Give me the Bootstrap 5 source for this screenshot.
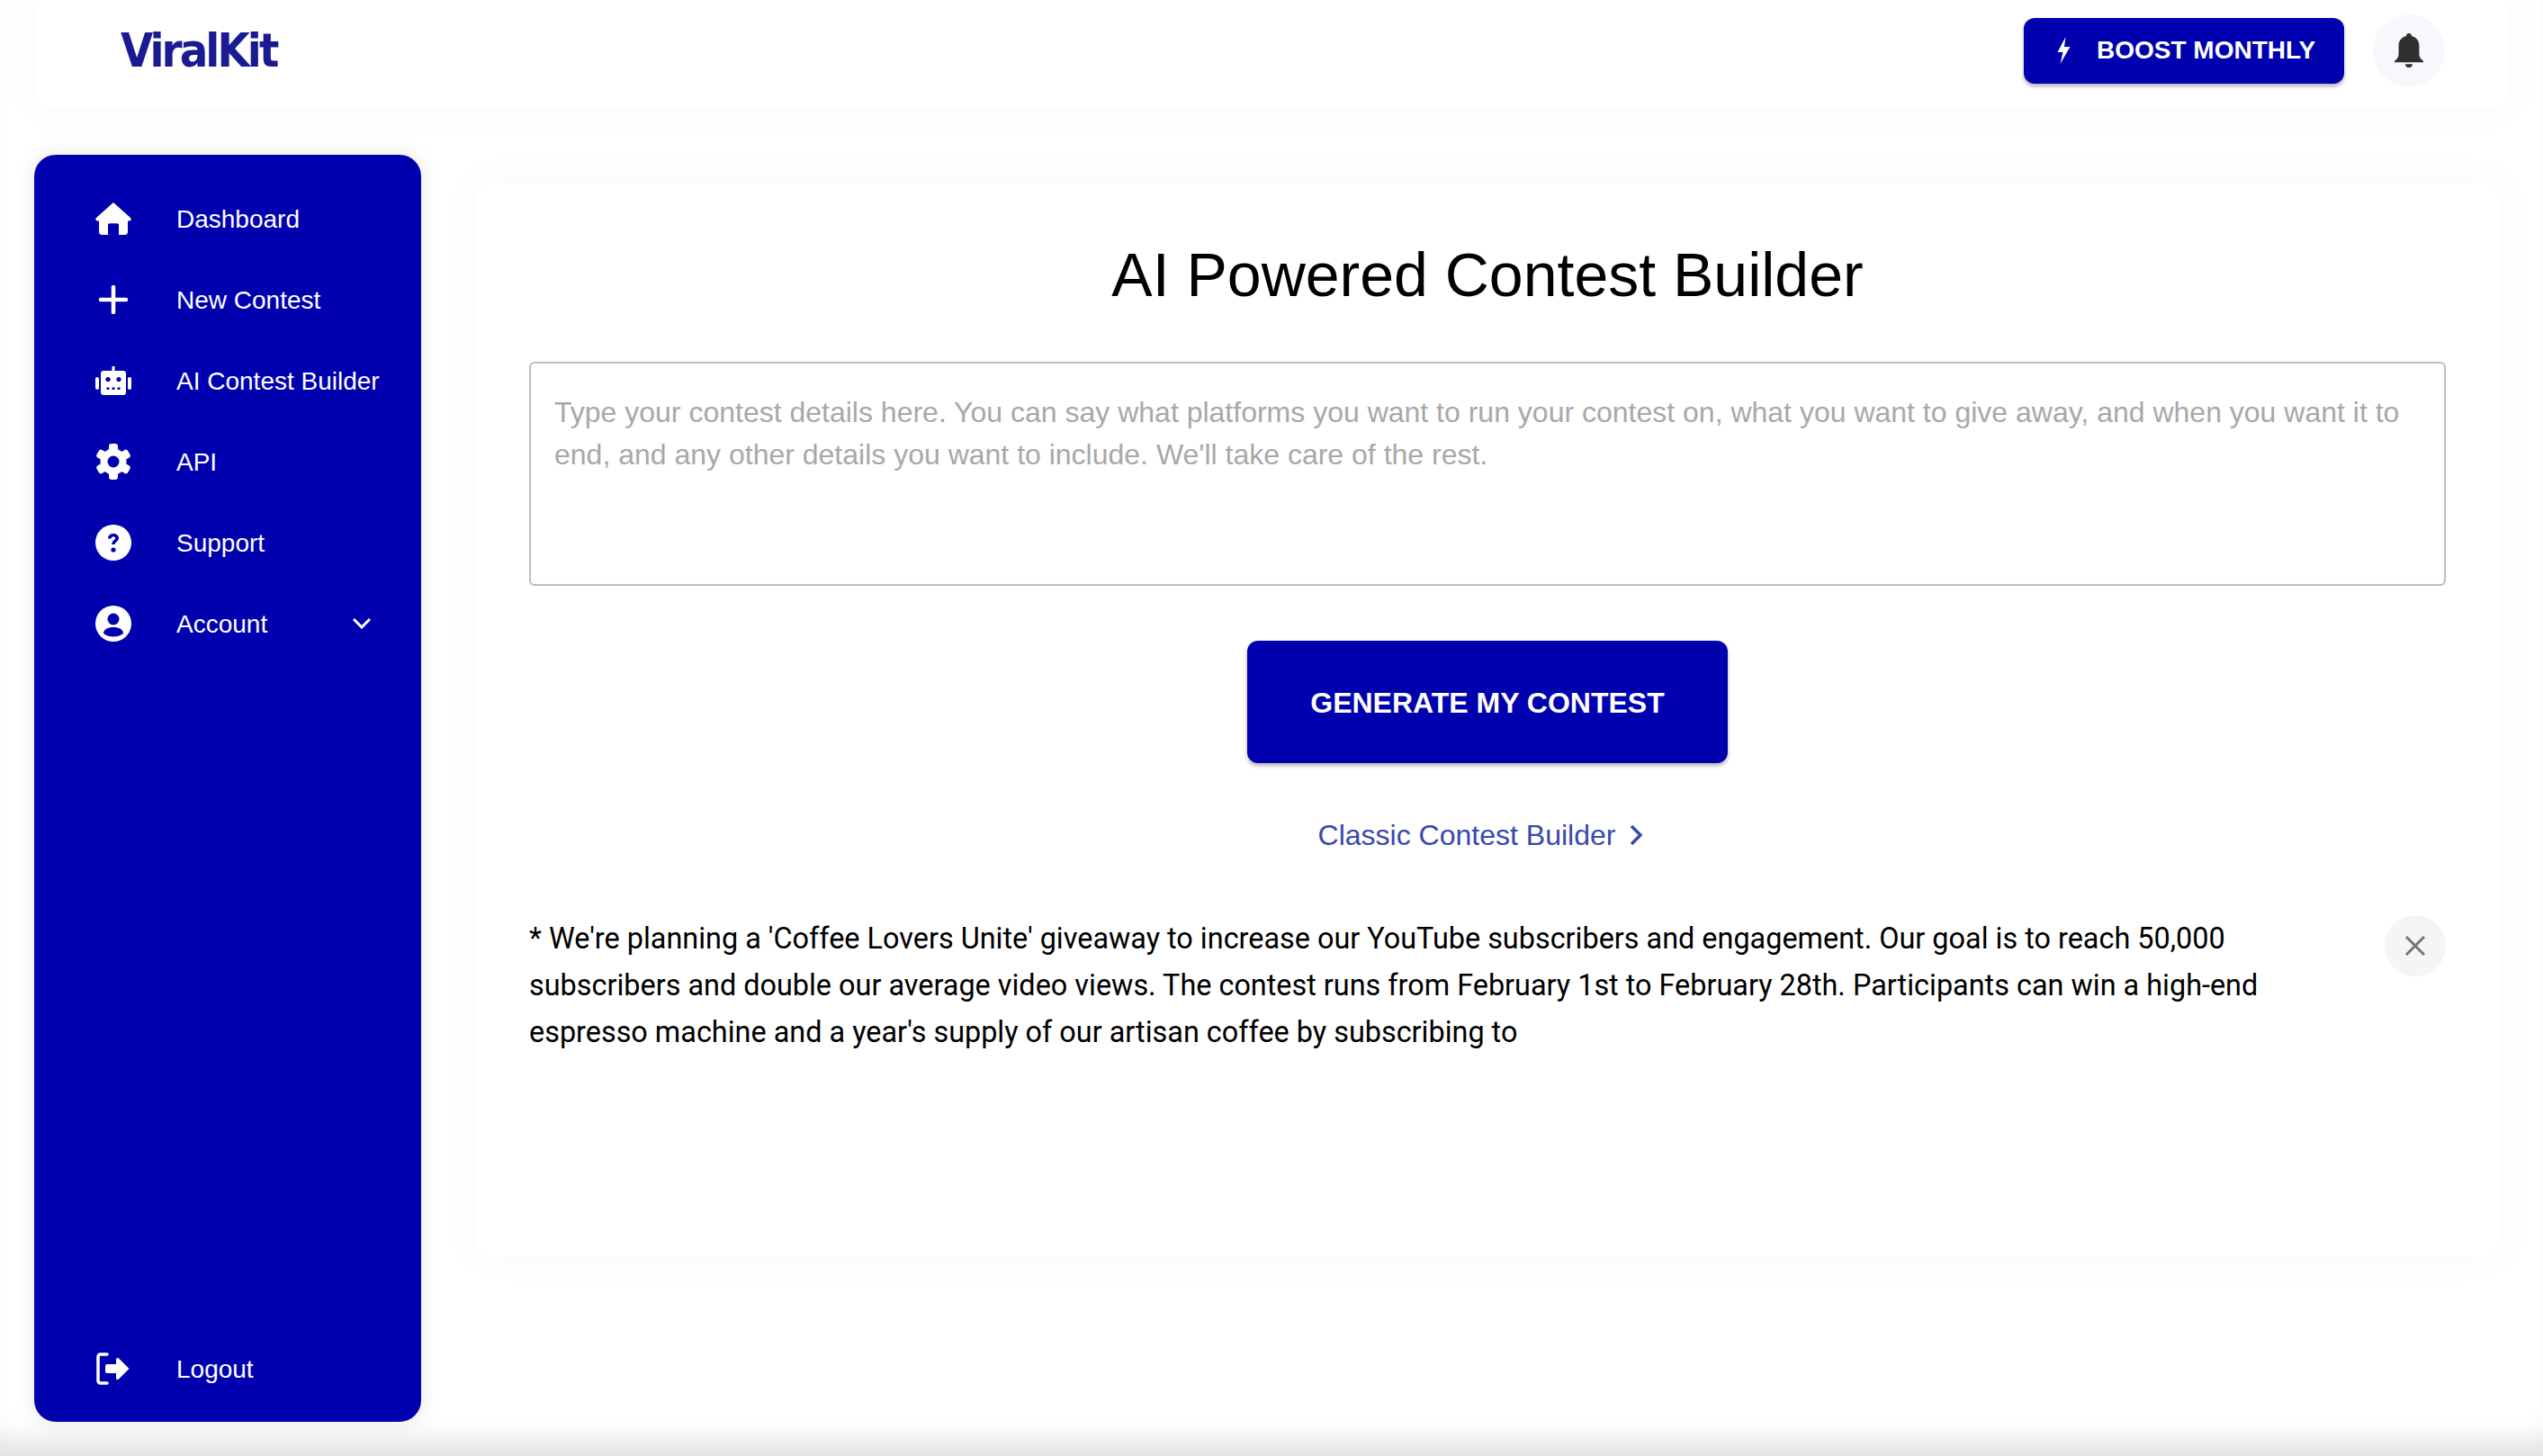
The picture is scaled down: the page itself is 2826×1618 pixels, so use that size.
<!DOCTYPE html>
<html lang="en">
<head>
  <meta charset="UTF-8">
  <title>AI Powered Contest Builder</title>
  <meta name="viewport" content="width=device-width, initial-scale=1">
  <link href="https://cdn.jsdelivr.net/npm/bootstrap@5.3.3/dist/css/bootstrap.min.css" rel="stylesheet">
  <style>
    html, body {
      height: 100%;
    }

    body {
      background-color: #fff;
      font-family: "Liberation Sans", Arial, sans-serif;
      overflow: hidden;
    }

    .page-wrap {
      height: 1618px;
      padding: 0 37px 38px 38px;
      box-shadow: inset 0 -34px 30px -18px rgba(0, 0, 0, 0.13);
    }

    .top-bar {
      height: 120px;
      padding: 0 72px 8px 96px;
      background-color: #fff;
      border-radius: 0 0 20px 20px;
      box-shadow: 0 0 40px 12px rgba(0, 0, 0, 0.02);
    }

    .brand-text {
      color: #1a1a92;
      font-family: "DejaVu Sans Condensed", "DejaVu Sans", sans-serif;
      font-size: 52px;
      font-weight: 700;
      letter-spacing: -2.9px;
      line-height: 1;
      text-decoration: none;
    }

    .boost-btn {
      width: 356px;
      height: 73px;
      padding: 0 0 0 36px;
      font-size: 28px;
      gap: 28px;
      white-space: nowrap;
      flex-shrink: 0;
    }

    .boost-btn svg {
      flex-shrink: 0;
    }

    .brand-btn {
      background-color: #0000af;
      border: 0;
      border-radius: 12px;
      color: #fff;
      font-weight: 700;
      box-shadow: 0 3px 4px rgba(0, 0, 0, 0.3);
    }

    .brand-btn:hover {
      background-color: #0000af;
      color: #fff;
    }

    .bell-btn {
      width: 80px;
      height: 80px;
      margin-left: 32px;
      background-color: #f7f8fc;
      border-radius: 50%;
      flex-shrink: 0;
    }

    .body-row {
      margin-top: 52px;
      height: 1408px;
    }

    .side-bar {
      width: 430px;
      flex-shrink: 0;
      padding: 26px 0 14px 0;
      background-color: #0000af;
      border-radius: 24px;
      box-shadow: 0 0 24px rgba(0, 0, 0, 0.1);
    }

    .side-link {
      height: 90px;
      padding: 0 56px 0 68px;
      color: #fff;
      font-size: 28px;
      white-space: nowrap;
      text-decoration: none;
    }

    .side-link:hover {
      color: #fff;
    }

    .side-link span {
      padding-top: 2px;
    }

    .side-icon {
      width: 40px;
      margin-right: 50px;
      flex-shrink: 0;
    }

    .main-card {
      width: 2250px;
      height: 1192px;
      margin: 32px 0 0 60px;
      padding: 0 60px;
      background-color: #fff;
      border-radius: 20px;
      box-shadow: 0 0 40px 12px rgba(0, 0, 0, 0.02);
    }

    .page-title {
      margin: 0;
      padding-top: 62px;
      color: #000;
      font-size: 68px;
      font-weight: 400;
      line-height: 78px;
    }

    .prompt-box {
      height: 249px;
      margin-top: 58px;
      padding: 31px 26px 26px;
      border: 2px solid #bdbdbd;
      border-radius: 6px;
      font-size: 32px;
      line-height: 47px;
      resize: none;
    }

    .prompt-box::placeholder {
      color: #a8a8a8;
    }

    .generate-btn {
      width: 534px;
      height: 136px;
      margin-top: 61px;
      padding-top: 8px;
      font-size: 32px;
    }

    .classic-link {
      margin-top: 60px;
      padding-right: 16px;
      color: #3949ab;
      font-size: 32px;
      line-height: 40px;
      text-decoration: none;
    }

    .suggest-row {
      margin-top: 69px;
    }

    .suggest-text {
      width: 1960px;
      margin: 0;
      color: #000;
      font-family: Roboto, "Liberation Sans", sans-serif;
      font-size: 32.4px;
      line-height: 52px;
    }

    .close-btn {
      width: 68px;
      height: 68px;
      background-color: #f5f5f5;
      border-radius: 50%;
    }
  </style>
</head>
<body>

<div class="page-wrap">
  <header class="top-bar d-flex align-items-center justify-content-between">
    <a class="brand-text" href="#">ViralKit</a>
    <div class="d-flex align-items-center">
      <button class="btn brand-btn boost-btn d-flex align-items-center" type="button">
        <svg width="17" height="30" viewBox="0 0 16 30" fill="#fff"><path d="M10 0 1 17h6L4 30 15 11H8.500L10 0Z"/></svg>
        <span>BOOST MONTHLY</span>
      </button>
      <div class="bell-btn d-flex align-items-center justify-content-center">
        <svg width="32" height="39" viewBox="0 0 28 40" preserveAspectRatio="none" fill="#303030"><path d="M14 0c1.700 0 2.600 1.200 2.600 3.200C21.500 4.700 24 9 24 14v10c0 3 1.600 5.500 4 7.500V33H0v-1.500C2.400 29.500 4 27 4 24V14c0-5 2.500-9.300 7.400-10.800C11.400 1.200 12.300 0 14 0Z"/><path d="M10.500 35h7c0 2.500-1.500 4-3.500 4s-3.500-1.500-3.500-4Z"/></svg>
      </div>
    </div>
  </header>

  <div class="body-row d-flex align-items-start">
    <nav class="side-bar d-flex flex-column h-100">
      <a class="side-link d-flex align-items-center" href="#">
        <svg class="side-icon" height="36" viewBox="0 0 40 36" fill="#fff"><path d="M20 0 39 17c1.500 1.500.5 3.500-1.200 3.500H36v12c0 2-1.200 3.500-3.200 3.500H26V25c0-1-.8-1.800-1.800-1.800h-8.400c-1 0-1.800.8-1.800 1.800v11H7.200C5.200 36 4 34.500 4 32.500v-12H2.200C.5 20.500-.5 18.500 1 17L20 0Z"/></svg>
        <span>Dashboard</span>
      </a>
      <a class="side-link d-flex align-items-center" href="#">
        <svg class="side-icon" height="32" viewBox="0 0 40 32" fill="none" stroke="#fff" stroke-width="4.500" stroke-linecap="round"><path d="M20 2v28M6 16h28"/></svg>
        <span>New Contest</span>
      </a>
      <a class="side-link d-flex align-items-center" href="#">
        <svg class="side-icon" height="32" viewBox="0 0 40 32" fill="#fff"><path fill-rule="evenodd" d="M18.500 0h3v5H31c1.800 0 3 1.200 3 3v21c0 1.800-1.200 3-3 3H9c-1.800 0-3-1.200-3-3V8c0-1.800 1.200-3 3-3h9.500V0ZM14 12a2.600 2.600 0 1 0 0 5.200 2.600 2.600 0 0 0 0-5.200Zm12 0a2.600 2.600 0 1 0 0 5.200 2.600 2.600 0 0 0 0-5.200ZM12.500 23.500v2.500h3v-2.500h-3Zm6 0v2.500h3v-2.500h-3Zm6 0v2.500h3v-2.500h-3Z"/><rect x="0" y="12" width="4" height="14" rx="2"/><rect x="36" y="12" width="4" height="14" rx="2"/></svg>
        <span>AI Contest Builder</span>
      </a>
      <a class="side-link d-flex align-items-center" href="#">
        <svg class="side-icon" height="40" viewBox="0 0 40 40"><circle cx="20" cy="20" r="14.500" fill="#fff"/><rect x="15" y="0" width="10" height="40" rx="3" fill="#fff"/><rect x="15" y="0" width="10" height="40" rx="3" fill="#fff" transform="rotate(60 20 20)"/><rect x="15" y="0" width="10" height="40" rx="3" fill="#fff" transform="rotate(120 20 20)"/><circle cx="20" cy="20" r="6.500" fill="#0000af"/></svg>
        <span>API</span>
      </a>
      <a class="side-link d-flex align-items-center" href="#">
        <svg class="side-icon" height="40" viewBox="0 0 40 40"><circle cx="20" cy="20" r="20" fill="#fff"/><path d="M14 15.500c0-3.500 2.700-5.500 6-5.500s6 2 6 5c0 3.500-4.200 4-4.200 7h-3.600c0-4.500 4-5 4-7 0-1-1-1.700-2.200-1.700s-2.300.8-2.300 2.200H14Z" fill="#0000af"/><circle cx="20" cy="28" r="2.600" fill="#0000af"/></svg>
        <span>Support</span>
      </a>
      <a class="side-link d-flex align-items-center" href="#">
        <svg class="side-icon" height="40" viewBox="0 0 40 40"><circle cx="20" cy="20" r="20" fill="#fff"/><circle cx="20" cy="15" r="6.500" fill="#0000af"/><path d="M9 31c0-4.500 5-7 11-7s11 2.500 11 7c-3 2.500-7 3.500-11 3.500S12 33.500 9 31Z" fill="#0000af"/></svg>
        <span>Account</span>
        <svg class="ms-auto" width="20" height="12" viewBox="0 0 20 12" fill="none" stroke="#fff" stroke-width="3"><path d="m1 1 9 9 9-9"/></svg>
      </a>
      <a class="side-link d-flex align-items-center mt-auto" href="#">
        <svg class="side-icon" height="36" viewBox="0 0 40 36" fill="#fff"><path d="M13 2H6C4 2 3 3 3 5v26c0 2 1 3 3 3h7" fill="none" stroke="#fff" stroke-width="3.500" stroke-linecap="round"/><path d="M13 13h10V7.500c0-1.500 1.800-2.200 3-1L37.500 18 26 29.500c-1.200 1.200-3 .5-3-1V23H13c-1.200 0-2-.8-2-2v-6c0-1.200.8-2 2-2Z"/></svg>
        <span>Logout</span>
      </a>
    </nav>

    <main class="main-card d-flex flex-column">
      <h1 class="page-title text-center">AI Powered Contest Builder</h1>
      <textarea class="form-control prompt-box" placeholder="Type your contest details here. You can say what platforms you want to run your contest on, what you want to give away, and when you want it to end, and any other details you want to include. We'll take care of the rest."></textarea>
      <button class="btn brand-btn generate-btn align-self-center" type="button">GENERATE MY CONTEST</button>
      <a class="classic-link align-self-center d-flex align-items-center gap-3" href="#">
        <span>Classic Contest Builder</span>
        <svg width="14" height="24" viewBox="0 0 14 24" fill="none" stroke="#3949ab" stroke-width="3.500"><path d="m2 2 10 10L2 22"/></svg>
      </a>
      <div class="suggest-row d-flex justify-content-between align-items-start">
        <p class="suggest-text">* We're planning a 'Coffee Lovers Unite' giveaway to increase our YouTube subscribers and engagement. Our goal is to reach 50,000 subscribers and double our average video views. The contest runs from February 1st to February 28th. Participants can win a high-end espresso machine and a year's supply of our artisan coffee by subscribing to</p>
        <div class="close-btn d-flex align-items-center justify-content-center">
          <svg width="22" height="22" viewBox="0 0 22 22" fill="none" stroke="#757575" stroke-width="3"><path d="m1 1 20 20M21 1 1 21"/></svg>
        </div>
      </div>
    </main>
  </div>
</div>

<script src="https://cdn.jsdelivr.net/npm/bootstrap@5.3.3/dist/js/bootstrap.bundle.min.js"></script>
</body>
</html>
